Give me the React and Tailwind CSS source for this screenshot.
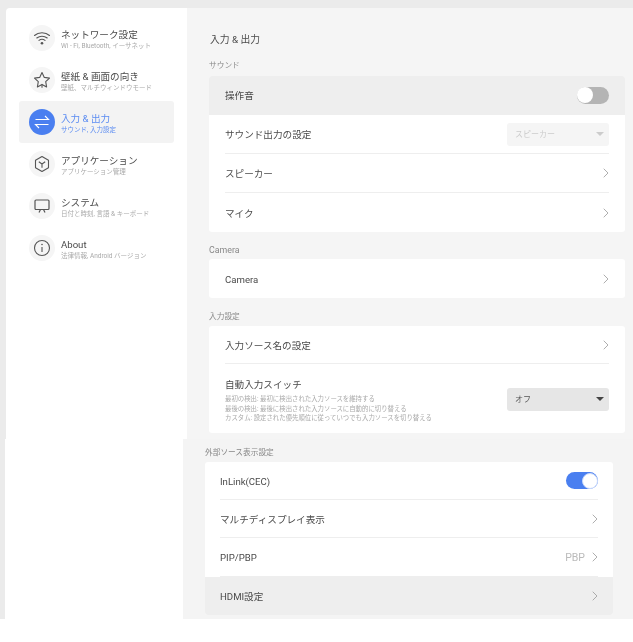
import { ChevronRight } from 'lucide-react'

const fontStack = 'font-[Roboto,"Noto_Sans_CJK_JP",sans-serif]'

const navItems = [
  { title: 'ネットワーク設定', sub: 'Wi - Fi, Bluetooth, イーサネット', icon: <WifiIcon /> },
  { title: '壁紙 & 画面の向き', sub: '壁紙、マルチウィンドウモード', icon: <StarIcon /> },
  { title: '入力 & 出力', sub: 'サウンド, 入力設定', active: true, icon: <SwapIcon /> },
  { title: 'アプリケーション', sub: 'アプリケーション管理', icon: <HexIcon /> },
  { title: 'システム', sub: '日付と時刻, 言語 & キーボード', icon: <ScreenIcon /> },
  { title: 'About', sub: '法律情報, Android バージョン', icon: <InfoIcon /> },
]

function WifiIcon() {
  return (
    <svg width="18" height="18" viewBox="0 0 18 18" fill="none" stroke="#555" strokeWidth="1.1" strokeLinecap="round">
      <path d="M1.5 6.5C5.5 2.8 12.5 2.8 16.5 6.5" />
      <path d="M3.8 9C6.8 6.6 11.2 6.6 14.2 9" />
      <path d="M6 11.4C7.8 10 10.2 10 12 11.4" />
      <circle cx="9" cy="14.2" r="1.3" fill="#555" stroke="none" />
    </svg>
  )
}

function StarIcon() {
  return (
    <svg width="18" height="18" viewBox="0 0 18 18" fill="none" stroke="#555" strokeWidth="1.1" strokeLinejoin="round">
      <path d="M9 1.5l2.3 4.9 5.2.7-3.8 3.6.9 5.2L9 13.4l-4.6 2.5.9-5.2L1.5 7.1l5.2-.7z" />
      <path d="M9 13.4v3.4" />
    </svg>
  )
}

function SwapIcon() {
  return (
    <svg width="16" height="16" viewBox="0 0 16 16" fill="none" stroke="white" strokeWidth="1.1">
      <path d="M1.5 5.5h13L11 2M14.5 10.5h-13L5 14" />
    </svg>
  )
}

function HexIcon() {
  return (
    <svg width="18" height="18" viewBox="0 0 18 18" fill="none" stroke="#555" strokeWidth="1.1" strokeLinejoin="round">
      <path d="M9 1.5l6.5 3.7v7.6L9 16.5l-6.500-3.700V5.200z" />
      <path d="M5.800 6.800L9 9l3.200-2.200M9 9v3.800" />
    </svg>
  )
}

function ScreenIcon() {
  return (
    <svg width="18" height="18" viewBox="0 0 18 18" fill="none" stroke="#555" strokeWidth="1.2">
      <rect x="2" y="3" width="14" height="9.500" rx="1" />
      <path d="M6 15.500l1.500-3M12 15.500l-1.500-3M5 12.500h8" />
    </svg>
  )
}

function InfoIcon() {
  return (
    <svg width="18" height="18" viewBox="0 0 18 18" fill="none" stroke="#555" strokeWidth="1.1">
      <circle cx="9" cy="9" r="7.500" />
      <path d="M9 8v5" />
      <circle cx="9" cy="5.500" r="0.800" fill="#555" stroke="none" />
    </svg>
  )
}

function NavItem({ item }) {
  return (
    <div className={`flex h-[42px] items-center gap-[6px] rounded-[3px] pl-[10px] ${item.active ? 'bg-[#f3f3f3]' : ''}`}>
      <div className={`flex h-[26px] w-[26px] items-center justify-center rounded-full ${item.active ? 'bg-[#4a7ff0]' : 'bg-[#f5f5f5]'}`}>
        {item.icon}
      </div>
      <div className="pt-[3px]">
        <div className={`text-[9.6px] leading-[13px] ${item.active ? 'text-[#5b8cf2]' : 'text-[#4a4a4a]'}`}>{item.title}</div>
        <div className={`text-[6.5px] leading-[10px] ${item.active ? 'text-[#5b8cf2]' : 'text-[#aaa]'}`}>{item.sub}</div>
      </div>
    </div>
  )
}

function Chevron() {
  return <ChevronRight size={16} strokeWidth={1.2} className="-mr-[5px] text-[#999]" />
}

function Toggle({ on }) {
  return (
    <div className={`flex h-[17px] w-[32px] items-center rounded-full ${on ? 'justify-end bg-[#4a7ff0]' : 'justify-start bg-[#b4b4b4]'}`}>
      <div className={`h-[16px] w-[16px] rounded-full bg-white ${on ? 'border border-[#c9d9fb]' : ''}`} />
    </div>
  )
}

function Select({ value, disabled }) {
  return (
    <div className={`flex h-[23px] w-[102px] items-center justify-between rounded-[3px] pl-[8px] pr-[5px] text-[8px] ${disabled ? 'bg-[#f5f5f5] text-[#ccc]' : 'bg-[#e6e6e6] text-[#555]'}`}>
      <span className="pt-[2px]">{value}</span>
      <span className={`h-0 w-0 border-x-[4px] border-t-[4px] border-x-transparent ${disabled ? 'border-t-[#ccc]' : 'border-t-[#444]'}`} />
    </div>
  )
}

function Row({ label, children, hover, last, h = 'h-[39px]', px = 'px-4' }) {
  return (
    <div className={`${h} ${px} ${hover ? 'bg-[#eeeeee]' : ''}`}>
      <div className={`flex h-full items-center justify-between text-[9.6px] text-[#4a4a4a] ${last ? '' : 'border-b border-[#eeeeee]'}`}>
        <span className="pt-[3px]">{label}</span>
        {children}
      </div>
    </div>
  )
}

function SectionLabel({ children, className = '' }) {
  return <div className={`h-[10px] text-[7.7px] leading-[12px] text-[#888] ${className}`}>{children}</div>
}

export default function App() {
  return (
    <div className={`min-h-[642px] bg-white blur-[0.3px] ${fontStack}`}>
      <div className="flex h-[439px] flex-col bg-[#ebebeb]">
        <div className="mt-[8px] flex min-h-0 flex-1 pl-[6px]">
          <aside className="w-[181px] rounded-tl-[4px] bg-white px-[13px] pt-[9px]">
            {navItems.map((item) => (
              <NavItem key={item.title} item={item} />
            ))}
          </aside>
          <main className="flex-1 bg-[#f5f5f5] pl-[22px] pr-[8px]">
            <h1 className="mt-[25px] pl-px text-[9.8px] font-normal leading-[13px] text-[#4a4a4a]">入力 & 出力</h1>
            <SectionLabel className="mt-[14px]">サウンド</SectionLabel>
            <div className="mt-[6px] overflow-hidden rounded-[3px] bg-white">
              <Row label="操作音" hover>
                <Toggle />
              </Row>
              <Row label="サウンド出力の設定">
                <Select value="スピーカー" disabled />
              </Row>
              <Row label="スピーカー">
                <Chevron />
              </Row>
              <Row label="マイク" last>
                <Chevron />
              </Row>
            </div>
            <SectionLabel className="mt-[12px]">
              <span className="text-[8.8px]">Camera</span>
            </SectionLabel>
            <div className="mt-[5px] rounded-[3px] bg-white">
              <Row label="Camera" last>
                <Chevron />
              </Row>
            </div>
            <SectionLabel className="mt-[13px]">入力設定</SectionLabel>
            <div className="mt-[5px] rounded-[3px] bg-white">
              <Row label="入力ソース名の設定" h="h-[38px]">
                <Chevron />
              </Row>
              <div className="flex h-[69px] items-center justify-between px-4 pt-px">
                <div className="mt-[13px] self-start">
                  <div className="text-[9.6px] leading-[13px] text-[#4a4a4a]">自動入力スイッチ</div>
                  <div className="mt-[4px] text-[6.4px] leading-[9.5px] text-[#aaa]">
                    <div>最初の検出: 最初に検出された入力ソースを維持する</div>
                    <div>最後の検出: 最後に検出された入力ソースに自動的に切り替える</div>
                    <div>カスタム: 設定された優先順位に従っていつでも入力ソースを切り替える</div>
                  </div>
                </div>
                <Select value="オフ" />
              </div>
            </div>
          </main>
        </div>
      </div>
      <div className="flex h-[180px] bg-[#ebebeb] pl-[5px]">
        <div className="w-[178px] bg-white" />
        <section className="flex-1 bg-[#f4f4f4] pl-[22px] pr-[20px]">
          <SectionLabel className="mt-[8px]">外部ソース表示設定</SectionLabel>
          <div className="mt-[5px] overflow-hidden rounded-[3px] bg-white">
            <Row label="InLink(CEC)" h="h-[38px]" px="px-[15px]">
              <Toggle on />
            </Row>
            <Row label="マルチディスプレイ表示" h="h-[38px]" px="px-[15px]">
              <Chevron />
            </Row>
            <Row label="PIP/PBP" px="px-[15px]">
              <span className="flex items-center gap-[2px] text-[10.5px] text-[#bbb]">
                <span className="pt-[2px]">PBP</span>
                <Chevron />
              </span>
            </Row>
            <Row label="HDMI設定" hover last h="h-[38px]" px="px-[15px]">
              <Chevron />
            </Row>
          </div>
        </section>
      </div>
    </div>
  )
}
